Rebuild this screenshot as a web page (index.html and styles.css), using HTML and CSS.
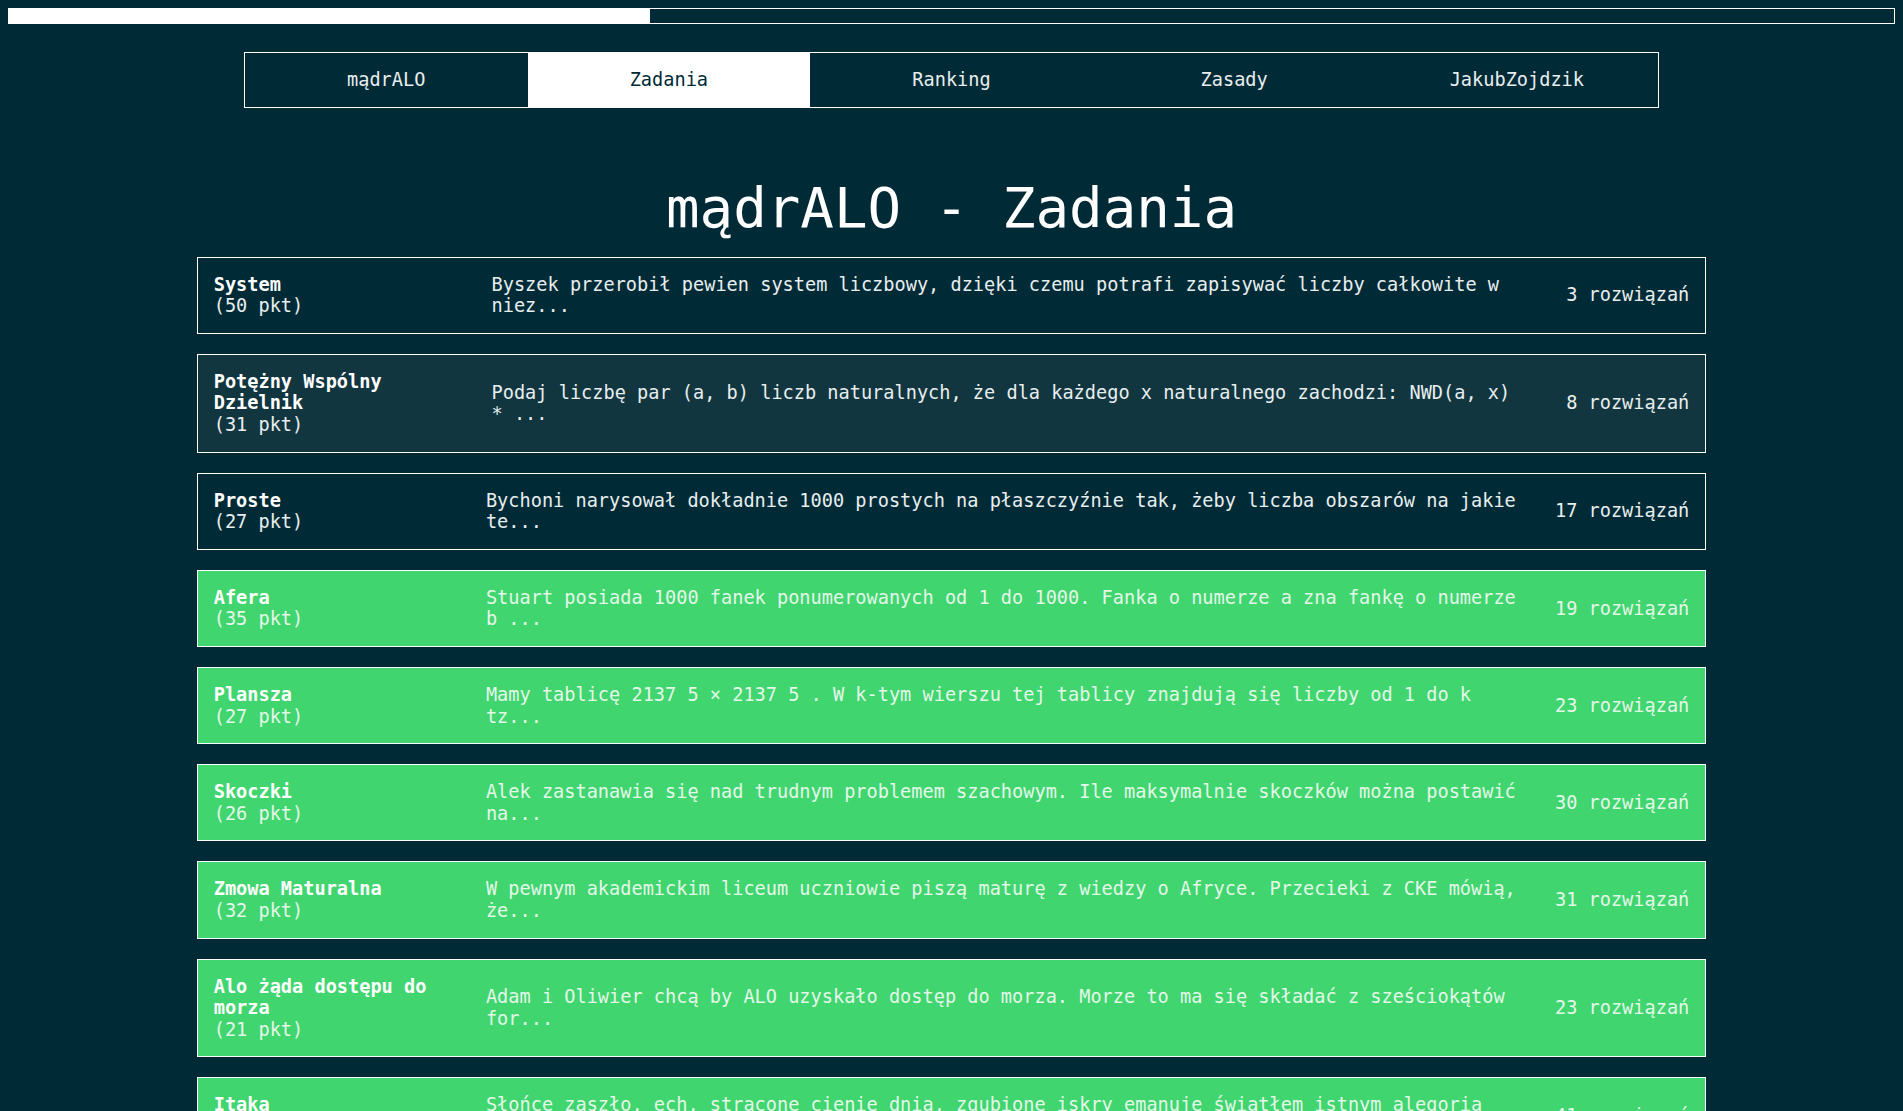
FILE: index.html
```html
<!DOCTYPE html>
<html lang="pl">
<head>
<meta charset="utf-8">
<title>mądrALO - Zadania</title>
<link rel="stylesheet" href="styles.css">
</head>
<body>
<div class="progress"><div class="progress-fill" style="width: 34%"></div></div>

<nav class="nav">
  <a class="nav-item" href="#">mądrALO</a>
  <a class="nav-item active" href="#">Zadania</a>
  <a class="nav-item" href="#">Ranking</a>
  <a class="nav-item" href="#">Zasady</a>
  <a class="nav-item" href="#">JakubZojdzik</a>
</nav>

<h1 class="title">mądrALO - Zadania</h1>

<main class="tasks">
  <div class="task">
    <div class="task-name"><span class="task-title">System</span><span class="task-pts">(50 pkt)</span></div>
    <div class="task-desc">Byszek przerobił pewien system liczbowy, dzięki czemu potrafi zapisywać liczby całkowite w niez...</div>
    <div class="task-count">3 rozwiązań</div>
  </div>
  <div class="task hover">
    <div class="task-name"><span class="task-title">Potężny Wspólny Dzielnik</span><span class="task-pts">(31 pkt)</span></div>
    <div class="task-desc">Podaj liczbę par (a, b) liczb naturalnych, że dla każdego x naturalnego zachodzi: NWD(a, x) * ...</div>
    <div class="task-count">8 rozwiązań</div>
  </div>
  <div class="task">
    <div class="task-name"><span class="task-title">Proste</span><span class="task-pts">(27 pkt)</span></div>
    <div class="task-desc">Bychoni narysował dokładnie 1000 prostych na płaszczyźnie tak, żeby liczba obszarów na jakie te...</div>
    <div class="task-count">17 rozwiązań</div>
  </div>
  <div class="task solved">
    <div class="task-name"><span class="task-title">Afera</span><span class="task-pts">(35 pkt)</span></div>
    <div class="task-desc">Stuart posiada 1000 fanek ponumerowanych od 1 do 1000. Fanka o numerze a zna fankę o numerze b ...</div>
    <div class="task-count">19 rozwiązań</div>
  </div>
  <div class="task solved">
    <div class="task-name"><span class="task-title">Plansza</span><span class="task-pts">(27 pkt)</span></div>
    <div class="task-desc">Mamy tablicę 2137 5 × 2137 5 . W k-tym wierszu tej tablicy znajdują się liczby od 1 do k tz...</div>
    <div class="task-count">23 rozwiązań</div>
  </div>
  <div class="task solved">
    <div class="task-name"><span class="task-title">Skoczki</span><span class="task-pts">(26 pkt)</span></div>
    <div class="task-desc">Alek zastanawia się nad trudnym problemem szachowym. Ile maksymalnie skoczków można postawić na...</div>
    <div class="task-count">30 rozwiązań</div>
  </div>
  <div class="task solved">
    <div class="task-name"><span class="task-title">Zmowa Maturalna</span><span class="task-pts">(32 pkt)</span></div>
    <div class="task-desc">W pewnym akademickim liceum uczniowie piszą maturę z wiedzy o Afryce. Przecieki z CKE mówią, że...</div>
    <div class="task-count">31 rozwiązań</div>
  </div>
  <div class="task solved">
    <div class="task-name"><span class="task-title">Alo żąda dostępu do morza</span><span class="task-pts">(21 pkt)</span></div>
    <div class="task-desc">Adam i Oliwier chcą by ALO uzyskało dostęp do morza. Morze to ma się składać z sześciokątów for...</div>
    <div class="task-count">23 rozwiązań</div>
  </div>
  <div class="task solved">
    <div class="task-name"><span class="task-title">Itaka</span><span class="task-pts">(30 pkt)</span></div>
    <div class="task-desc">Słońce zaszło, ech, stracone cienie dnia, zgubione iskry emanuje światłem istnym alegoria bez...</div>
    <div class="task-count">41 rozwiązań</div>
  </div>
</main>
</body>
</html>
```

FILE: styles.css
```css
html {
  scrollbar-width: none;
}

body {
  margin: 8px;
  background: #002b36;
  color: #e8eef0;
  font-family: "DejaVu Sans Mono", monospace;
  font-size: 18.6px;
  line-height: 1.163;
}

.progress {
  height: 16px;
  border: 1px solid #ffffff;
  box-sizing: border-box;
}

.progress-fill {
  height: 100%;
  background: #ffffff;
}

.nav {
  display: flex;
  width: 75%;
  margin: 28px auto 0;
  border: 1px solid #ffffff;
  box-sizing: border-box;
}

.nav-item {
  flex: 1;
  text-align: center;
  padding: 16px 0;
  color: #e8eef0;
  text-decoration: none;
}

.nav-item.active {
  background: #ffffff;
  color: #002b36;
}

.title {
  margin: 68px 0 16px;
  text-align: center;
  font-size: 3em;
  line-height: 1.163;
  font-weight: normal;
  color: #ffffff;
}

.tasks {
  display: flex;
  flex-direction: column;
  gap: 20px;
  align-items: center;
}

.task {
  width: 80%;
  box-sizing: border-box;
  border: 1px solid #ffffff;
  padding: 16px;
  display: flex;
  justify-content: space-between;
  align-items: center;
}

.task.hover {
  background: #12363f;
}

.task.solved {
  background: #40d56f;
  color: #e4f8e9;
}

.task-name {
  width: 16%;
  flex: none;
  display: flex;
  flex-direction: column;
}

.task-title {
  font-weight: bold;
  color: #ffffff;
}

.task-desc {
  width: 70%;
  flex: none;
}

.task-count {
  flex: none;
  white-space: nowrap;
}
```
